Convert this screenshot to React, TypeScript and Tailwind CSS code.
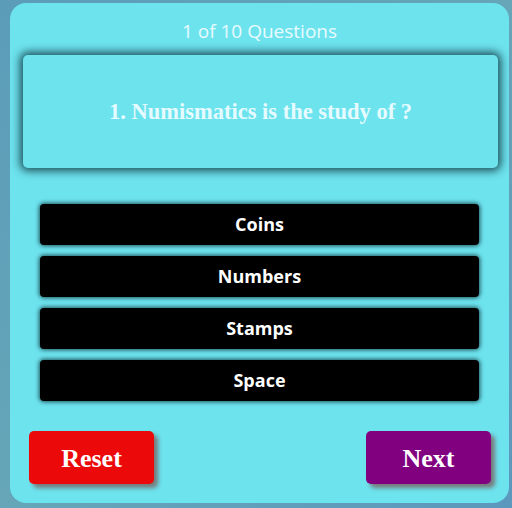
import React from "react";

const options = ["Coins", "Numbers", "Stamps", "Space"];

function App() {
  return (
    <div className="w-[512px] h-[508px] bg-gradient-to-br from-[#5b9cb9] via-[#66a6b8] to-[#5c97bd] pt-[3px] pl-[10px] overflow-hidden">
      <div className="w-[499px] h-[500px] rounded-[16px] bg-[#6de3ee] flex flex-col pt-[15px] px-[13px]">
        {/* Progress */}
        <div className="text-center text-[19px] leading-[26px] text-[#e8fbff] font-['Open_Sans',sans-serif]">
          1 of 10 Questions
        </div>

        {/* Question card */}
        <div className="mt-[11px] mr-[-2px] h-[113px] rounded-[5px] bg-[#6de3ee] shadow-[0_0_9px_3px_rgba(15,55,65,0.85)] flex items-center justify-center">
          <h2 className="text-[22.5px] font-bold text-[#e6fbff] font-['Liberation_Serif',serif]">
            1. Numismatics is the study of ?
          </h2>
        </div>

        {/* Options */}
        <div className="mt-[36px] px-[17px] flex flex-col gap-[11px]">
          {options.map((opt) => (
            <button
              key={opt}
              className="h-[41px] w-full rounded-[4px] bg-black text-white text-[18px] font-bold font-['Open_Sans',sans-serif] shadow-[0_0_4px_1px_rgba(15,55,65,0.85)]"
            >
              {opt}
            </button>
          ))}
        </div>

        {/* Actions */}
        <div className="mt-[30px] px-[6px] flex justify-between">
          <button className="w-[125px] h-[53px] rounded-[5px] bg-[#eb0909] text-white text-[26px] font-bold font-['Liberation_Serif',serif] shadow-[4px_4px_4px_rgba(120,110,110,0.9)] pt-[2px]">
            Reset
          </button>
          <button className="w-[125px] h-[53px] rounded-[5px] bg-[#800080] text-white text-[26px] font-bold font-['Liberation_Serif',serif] shadow-[4px_4px_4px_rgba(120,110,110,0.9)] mr-[-1px] pt-[2px]">
            Next
          </button>
        </div>
      </div>
    </div>
  );
}

export default App;
